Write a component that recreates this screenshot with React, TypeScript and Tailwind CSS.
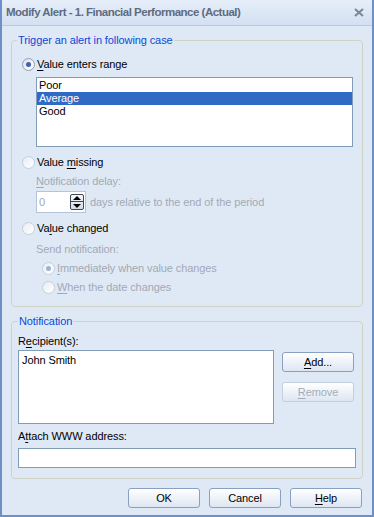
import React from 'react';

const font = { fontFamily: '"Liberation Sans", Arial, sans-serif' };

function Radio({ checked, disabled }: { checked?: boolean; disabled?: boolean }) {
  return (
    <span
      className={
        'flex h-[13px] w-[13px] shrink-0 items-center justify-center rounded-full border bg-gradient-to-br ' +
        (disabled
          ? 'border-[#c5cfdc] from-[#e8edf3] to-[#ffffff]'
          : 'border-[#8f9fb5] from-[#dde3ea] to-[#ffffff]')
      }
    >
      {checked && (
        <span
          className={
            'h-[5px] w-[5px] rounded-full ' + (disabled ? 'bg-[#9fb3cf]' : 'bg-[#3c64a8]')
          }
        />
      )}
    </span>
  );
}

function U({ children }: { children: React.ReactNode }) {
  return <span className="underline underline-offset-2">{children}</span>;
}

function Btn({ children, disabled }: { children: React.ReactNode; disabled?: boolean }) {
  return (
    <div
      className={
        'flex h-[20px] w-[72px] items-center justify-center rounded-[3px] border bg-gradient-to-b from-[#ffffff] to-[#dde6f2] text-[11px] ' +
        (disabled ? 'border-[#c3cfdf] text-[#a3acb8]' : 'border-[#8aa0c0] text-black')
      }
    >
      {children}
    </div>
  );
}

export default function App() {
  return (
    <div
      style={font}
      className="flex h-[517px] w-[374px] flex-col border-x-2 border-b-2 border-[#6f90c6] bg-[#dfe9f6] text-[11px] leading-[13px] tracking-[-0.1px] text-black"
    >
      {/* title bar */}
      <div className="flex h-[26px] shrink-0 items-center justify-between border-b border-[#b9cbe4] bg-gradient-to-b from-[#e6eef9] to-[#d3e0f1] pl-[4px] pr-[8px]">
        <span className="text-[11.5px] font-bold tracking-[-0.5px] text-[#5e6c80]">
          Modify Alert - 1. Financial Performance (Actual)
        </span>
        <svg width="10" height="9" viewBox="0 0 10 9">
          <path d="M1 1 L9 8 M9 1 L1 8" stroke="#7b8594" strokeWidth="2" />
        </svg>
      </div>

      <div className="flex flex-col px-[9px]">
        {/* trigger group */}
        <fieldset className="mt-[8px] rounded-[4px] border border-[#cfd3c4] px-[10px] pb-[12px]">
          <legend className="ml-[-5px] px-[1px] text-[#0b4ad6]">Trigger an alert in following case</legend>
          <div className="mt-[10px] flex h-[14px] items-center gap-[1px]">
            <Radio checked />
            <span className="ml-[1px]"><U>V</U>alue enters range</span>
          </div>
          <div className="ml-[14px] mr-[-1px] mt-[6px] h-[70px] border border-[#7f9db9] bg-white pt-[1px]">
            <div className="h-[13px] pl-[2px]">Poor</div>
            <div className="h-[13px] bg-[#316ac5] pl-[2px] text-white">Average</div>
            <div className="h-[13px] pl-[2px]">Good</div>
          </div>

          <div className="mt-[8px] flex h-[14px] items-center gap-[1px]">
            <Radio disabled />
            <span className="ml-[1px]">Value <U>m</U>issing</span>
          </div>
          <div className="ml-[14px] mt-[6px] h-[14px] text-[#a1a9b4]">
            <U>N</U>otification delay:
          </div>
          <div className="ml-[14px] mt-[2px] flex items-center">
            <div className="flex h-[22px] w-[50px] items-center border border-[#b3c4d8] bg-white pl-[2px] pr-[1px] text-[#a1a9b4]">
              <span className="flex-1">0</span>
              <div className="flex h-[16px] w-[14px] flex-col overflow-hidden rounded-[2px] border border-[#3f4a58] bg-gradient-to-b from-[#f4f7fb] to-[#d4dde9]">
                <div className="flex h-[7px] items-center justify-center border-b border-[#3f4a58]">
                  <svg width="8" height="4" viewBox="0 0 8 4"><path d="M0 4 L4 0 L8 4 Z" fill="#000" /></svg>
                </div>
                <div className="flex flex-1 items-center justify-center">
                  <svg width="8" height="4" viewBox="0 0 8 4"><path d="M0 0 L8 0 L4 4 Z" fill="#000" /></svg>
                </div>
              </div>
            </div>
            <span className="ml-[4px] text-[#a1a9b4]">days relative to the end of the period</span>
          </div>

          <div className="mt-[8px] flex h-[14px] items-center gap-[1px]">
            <Radio disabled />
            <span className="ml-[1px]">Va<U>l</U>ue changed</span>
          </div>
          <div className="ml-[14px] mt-[8px] h-[14px] text-[#a1a9b4]">Send notification:</div>
          <div className="ml-[20px] mt-[4px] flex h-[14px] items-center gap-[1px] text-[#a1a9b4]">
            <Radio checked disabled />
            <span className="ml-[1px]"><U>I</U>mmediately when value changes</span>
          </div>
          <div className="ml-[20px] mt-[5px] flex h-[14px] items-center gap-[1px] text-[#a1a9b4]">
            <Radio disabled />
            <span className="ml-[1px]"><U>W</U>hen the date changes</span>
          </div>
        </fieldset>

        {/* notification group */}
        <fieldset className="mt-[8px] rounded-[4px] border border-[#cfd3c4] px-[6px] pb-[10px]">
          <legend className="px-[1px] text-[#0b4ad6]">Notification</legend>
          <div className="mt-[7px] h-[14px]">R<U>e</U>cipient(s):</div>
          <div className="mt-[1px] flex">
            <div className="h-[74px] w-[256px] border border-[#7f9db9] bg-white pl-[3px] pt-[3px]">
              John Smith
            </div>
            <div className="ml-[8px] mt-[2px] flex flex-col gap-[10px]">
              <Btn><span><U>A</U>dd...</span></Btn>
              <Btn disabled><span><U>R</U>emove</span></Btn>
            </div>
          </div>
          <div className="mt-[6px] h-[14px]">A<U>t</U>tach WWW address:</div>
          <div className="mt-[4px] h-[20px] w-[338px] border border-[#7f9db9] bg-white" />
        </fieldset>

        {/* dialog buttons */}
        <div className="mt-[9px] flex justify-end gap-[9px] pr-[1px]">
          <Btn>OK</Btn>
          <Btn>Cancel</Btn>
          <Btn><span><U>H</U>elp</span></Btn>
        </div>
      </div>
    </div>
  );
}
